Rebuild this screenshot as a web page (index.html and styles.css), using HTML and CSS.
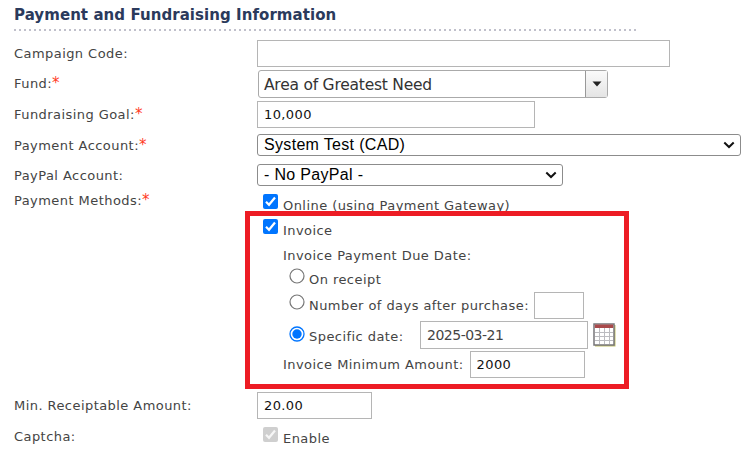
FILE: index.html
```
<!DOCTYPE html>
<html lang="en">
<head>
  <meta charset="UTF-8">
  <title>Payment and Fundraising Information</title>
  <meta name="viewport" content="width=device-width, initial-scale=1.0">
  <link rel="stylesheet" href="styles.css">
</head>
<body>
  <form class="form">
    <h1>Payment and Fundraising Information</h1>

    <div class="row">
      <label for="code">Campaign Code:</label>
      <input type="text" id="code" class="w-code">
    </div>
    <div class="row">
      <label>Fund:<b>*</b></label>
      <div class="combo">
        <span class="combo-text">Area of Greatest Need</span>
        <span class="combo-arrow"><svg width="10" height="6" viewBox="0 0 10 6"><path d="M.5 .5h9L5 5.500z" fill="#222"/></svg></span>
      </div>
    </div>
    <div class="row">
      <label for="goal">Fundraising Goal:<b>*</b></label>
      <input type="text" id="goal" class="w-goal" value="10,000">
    </div>
    <div class="row">
      <label>Payment Account:<b>*</b></label>
      <div class="select w-account">
        <span>System Test (CAD)</span>
        <svg width="12" height="8" viewBox="0 0 12 8"><path d="M1.300 1.500L6 6l4.700-4.500" fill="none" stroke="#111" stroke-width="2"/></svg>
      </div>
    </div>
    <div class="row paypal-row">
      <label>PayPal Account:</label>
      <div class="select w-paypal">
        <span>- No PayPal -</span>
        <svg width="12" height="8" viewBox="0 0 12 8"><path d="M1.300 1.500L6 6l4.700-4.500" fill="none" stroke="#111" stroke-width="2"/></svg>
      </div>
    </div>

    <div class="row methods-row">
      <label>Payment Methods:<b>*</b></label>
      <div class="methods">
        <div class="check">
          <svg class="box" viewBox="0 0 15 15"><rect width="15" height="15" rx="2" fill="#0075ff"/><path d="M3 7.800l3 3 6-7.300" fill="none" stroke="#fff" stroke-width="2.200"/></svg>
          <span>Online (using Payment Gateway)</span>
        </div>
        <div class="check">
          <svg class="box" viewBox="0 0 15 15"><rect width="15" height="15" rx="2" fill="#0075ff"/><path d="M3 7.800l3 3 6-7.300" fill="none" stroke="#fff" stroke-width="2.200"/></svg>
          <span>Invoice</span>
        </div>
        <div class="invoice">
          <div class="due">Invoice Payment Due Date:</div>
          <div class="option receipt">
            <svg class="radio" viewBox="0 0 16 16"><circle cx="8" cy="8" r="7" fill="#fff" stroke="#767676" stroke-width="1.200"/></svg>
            <span>On receipt</span>
          </div>
          <div class="option days">
            <svg class="radio" viewBox="0 0 16 16"><circle cx="8" cy="8" r="7" fill="#fff" stroke="#767676" stroke-width="1.200"/></svg>
            <span>Number of days after purchase:</span>
            <input type="text" class="w-days">
          </div>
          <div class="option date">
            <svg class="radio" viewBox="0 0 16 16"><circle cx="8" cy="8" r="7" fill="#fff" stroke="#0075ff" stroke-width="1.300"/><circle cx="8" cy="8" r="4.700" fill="#0075ff"/></svg>
            <span>Specific date:</span>
            <input type="text" class="w-date" value="2025-03-21">
            <svg class="calendar" width="23" height="24" viewBox="0 0 23 24">
              <path d="M2 2h20.500v21.500H2z" fill="#c3c36a"/>
              <path d="M1 1h20v21H1z" fill="#fff" stroke="#77767a" stroke-width="1.500"/>
              <path d="M1.800 1.500h18.400v3.500H1.800z" fill="#a9494b"/>
              <path d="M2 9.500H20M2 13.500H20M2 17.500H20M6.500 5v16M11.500 5v16M16.500 5v16" stroke="#bcbcc0"/>
            </svg>
          </div>
          <div class="minimum">
            <span>Invoice Minimum Amount:</span>
            <input type="text" class="w-amount" value="2000">
          </div>
        </div>
        <div class="highlight"></div>
      </div>
    </div>

    <div class="row">
      <label for="min">Min. Receiptable Amount:</label>
      <input type="text" id="min" class="w-amount" value="20.00">
    </div>
    <div class="row">
      <label>Captcha:</label>
      <div class="check captcha">
        <svg class="box" viewBox="0 0 15 15"><rect width="15" height="15" rx="2" fill="#cfcfcf"/><path d="M3 7.800l3 3 6-7.300" fill="none" stroke="#f6f6f6" stroke-width="2.200"/></svg>
        <span>Enable</span>
      </div>
    </div>
  </form>
</body>
</html>
```
FILE: styles.css
```
* {
  box-sizing: border-box;
}

body {
  margin: 0;
  background: #fff;
  color: #444;
  font-family: Verdana, "DejaVu Sans", sans-serif;
  font-size: 13px;
  letter-spacing: 0.44px;
  white-space: nowrap;
}

.form {
  padding-left: 14px;
}

h1 {
  width: 623px;
  height: 31px;
  margin: 0 0 7px;
  color: #2b3a5c;
  font-size: 15px;
  line-height: 31px;
  letter-spacing: 0.06px;
  background: repeating-linear-gradient(to right, #c0c0cb 0 2px, transparent 2px 5px) 0 100% / 100% 2px no-repeat;
}

.row {
  display: grid;
  grid-template-columns: 243px auto;
  justify-content: start;
  align-items: center;
  height: 30.600px;
}

label b {
  color: #ff3c1f;
  font-size: 15px;
  font-weight: normal;
  line-height: 1;
}

input {
  height: 27px;
  padding: 0 6px;
  border: 1px solid #b5b5b5;
  color: #111;
  font-family: inherit;
  font-size: 13px;
  letter-spacing: 0.4px;
}

.w-code { width: 413px; }
.w-goal { width: 278px; }
.w-account { width: 484px; }
.w-paypal { width: 306px; }
.w-days { width: 50px; }
.w-amount { width: 115px; }

.combo {
  display: flex;
  width: 350px;
  height: 28px;
  margin-left: 1px;
  border: 1px solid #aaa;
  border-radius: 3px;
}

.combo-text {
  flex: 1;
  padding-left: 5px;
  color: #333;
  font-size: 15.500px;
  line-height: 28px;
  letter-spacing: -0.23px;
}

.combo-arrow {
  display: flex;
  align-items: center;
  justify-content: center;
  width: 22px;
  border-left: 1px solid #999;
  background: linear-gradient(#fafafa, #e4e4e4);
}

.select {
  display: flex;
  align-items: center;
  justify-content: space-between;
  height: 22px;
  padding: 0 5px 0 6px;
  border: 1px solid #8c8c8c;
  border-radius: 3px;
  color: #000;
  font-family: Arial, "Liberation Sans", sans-serif;
  font-size: 16px;
  letter-spacing: 0.32px;
}

.paypal-row {
  height: 29.600px;
}

.methods-row {
  height: 200.400px;
  align-items: start;
}

.methods-row > label {
  padding-top: 3px;
}

.methods {
  position: relative;
  padding-top: 4px;
}

.check {
  display: flex;
  gap: 5px;
  height: 25px;
  padding-left: 6px;
}

.box {
  width: 15px;
  height: 15px;
}

.check span {
  line-height: 23px;
}

.invoice {
  padding-left: 26px;
}

.due {
  height: 24px;
  line-height: 23px;
}

.option {
  display: flex;
  padding-left: 6px;
}

.radio {
  width: 16px;
  height: 16px;
  margin-right: 4px;
}

.receipt {
  height: 23px;
  line-height: 24px;
}

.days {
  height: 29px;
  align-items: center;
}

.days .radio {
  margin-bottom: 7px;
}

.w-days {
  margin-left: 5px;
}

.date {
  height: 30px;
  align-items: center;
}

.date .radio {
  margin-bottom: 2px;
}

.date span {
  width: 111px;
  padding-top: 4px;
}

.w-date {
  width: 168px;
  height: 28px;
  color: #444;
  font-size: 14px;
  letter-spacing: -0.5px;
}

.calendar {
  margin-left: 5px;
}

.minimum {
  display: flex;
  align-items: center;
  gap: 6px;
  height: 29px;
}

/* red frame around the invoice options */
.highlight {
  position: absolute;
  top: 21px;
  left: -12px;
  width: 384px;
  height: 178px;
  border: 5px solid #ed1c24;
}

.captcha {
  height: 18px;
}

.captcha span {
  line-height: 23px;
}
```
